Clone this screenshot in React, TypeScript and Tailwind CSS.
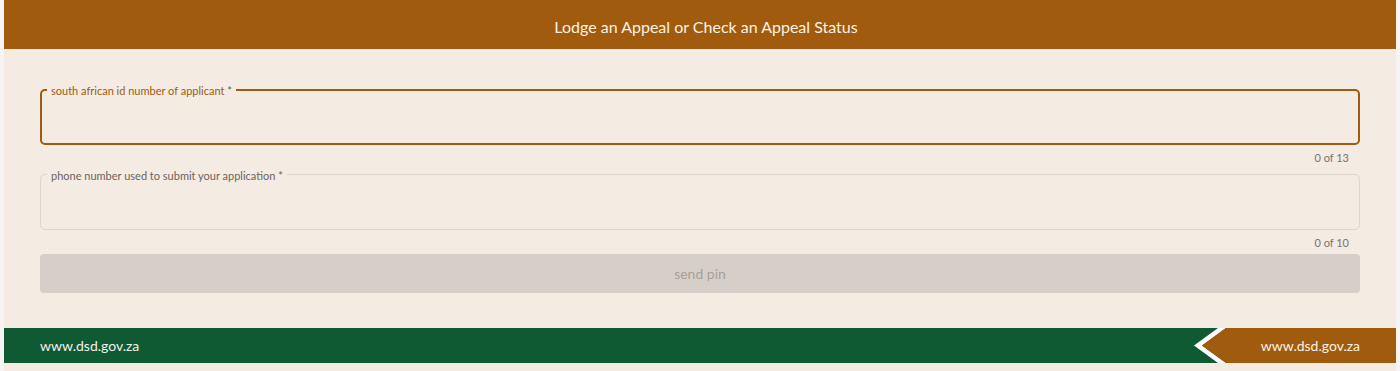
import React from "react";

const font = { fontFamily: "Lato, 'Open Sans', sans-serif" };

function Field({ label, active, count }: { label: string; active?: boolean; count: string }) {
  return (
    <div className="flex flex-col">
      <div
        className={
          active
            ? "relative h-[56px] rounded-[5px] border-2 border-[#a05b0e]"
            : "relative h-[56px] rounded-[5px] border border-[#ddd5cd]"
        }
      >
        <span
          className={
            active
              ? "absolute left-[5px] top-[-7px] bg-[#f4ebe2] px-[4px] text-[11px] leading-[13px] text-[#a05b0e]"
              : "absolute left-[6px] top-[-6px] bg-[#f4ebe2] px-[4px] text-[11px] leading-[13px] text-[#6b6460]"
          }
        >
          {label} <span className={active ? "text-[#2f7a55]" : "text-[#6b6460]"}>*</span>
        </span>
      </div>
      <div className="pr-[11px] text-right text-[11px] leading-[14px] text-[#7a726c] mt-[6px]">{count}</div>
    </div>
  );
}

export default function App() {
  return (
    <div className="min-h-screen bg-[#f7f5f3] px-[4px]" style={font}>
      <div className="flex min-h-[371px] flex-col bg-[#f4ebe2]">
        <header className="flex h-[49px] items-center justify-center bg-[#a05b0e] pl-[12px] pt-[4px] text-[16px] text-[#fbf1e4]">
          Lodge an Appeal or Check an Appeal Status
        </header>

        <main className="flex flex-col px-[36px] pt-[40px]">
          <Field label="south african id number of applicant" active count="0 of 13" />
          <div className="mt-[9px]">
            <Field label="phone number used to submit your application" count="0 of 10" />
          </div>
          <button
            disabled
            className="mt-[4px] h-[39px] rounded-[4px] bg-[#d6cfc9] text-[14px] text-[#a8a09a]"
          >
            send pin
          </button>
        </main>

        <footer className="mt-[35px] flex h-[35px] items-stretch bg-[#0f5a33]">
          <div className="flex flex-1 items-center pl-[36px] text-[14px] text-[#f1f1ec]">www.dsd.gov.za</div>
          <div className="relative flex w-[202px] items-center justify-end pr-[36px] text-[14px] text-[#fbf1e4]">
            <svg
              className="absolute inset-0 h-full w-full"
              viewBox="0 0 202 35"
              preserveAspectRatio="none"
            >
              <polygon points="24,0 32,0 8,17.5 32,35 24,35 0,17.5" fill="#ffffff" />
              <polygon points="32,0 202,0 202,35 32,35 8,17.5" fill="#a05b0e" />
            </svg>
            <span className="relative">www.dsd.gov.za</span>
          </div>
        </footer>
      </div>
    </div>
  );
}
